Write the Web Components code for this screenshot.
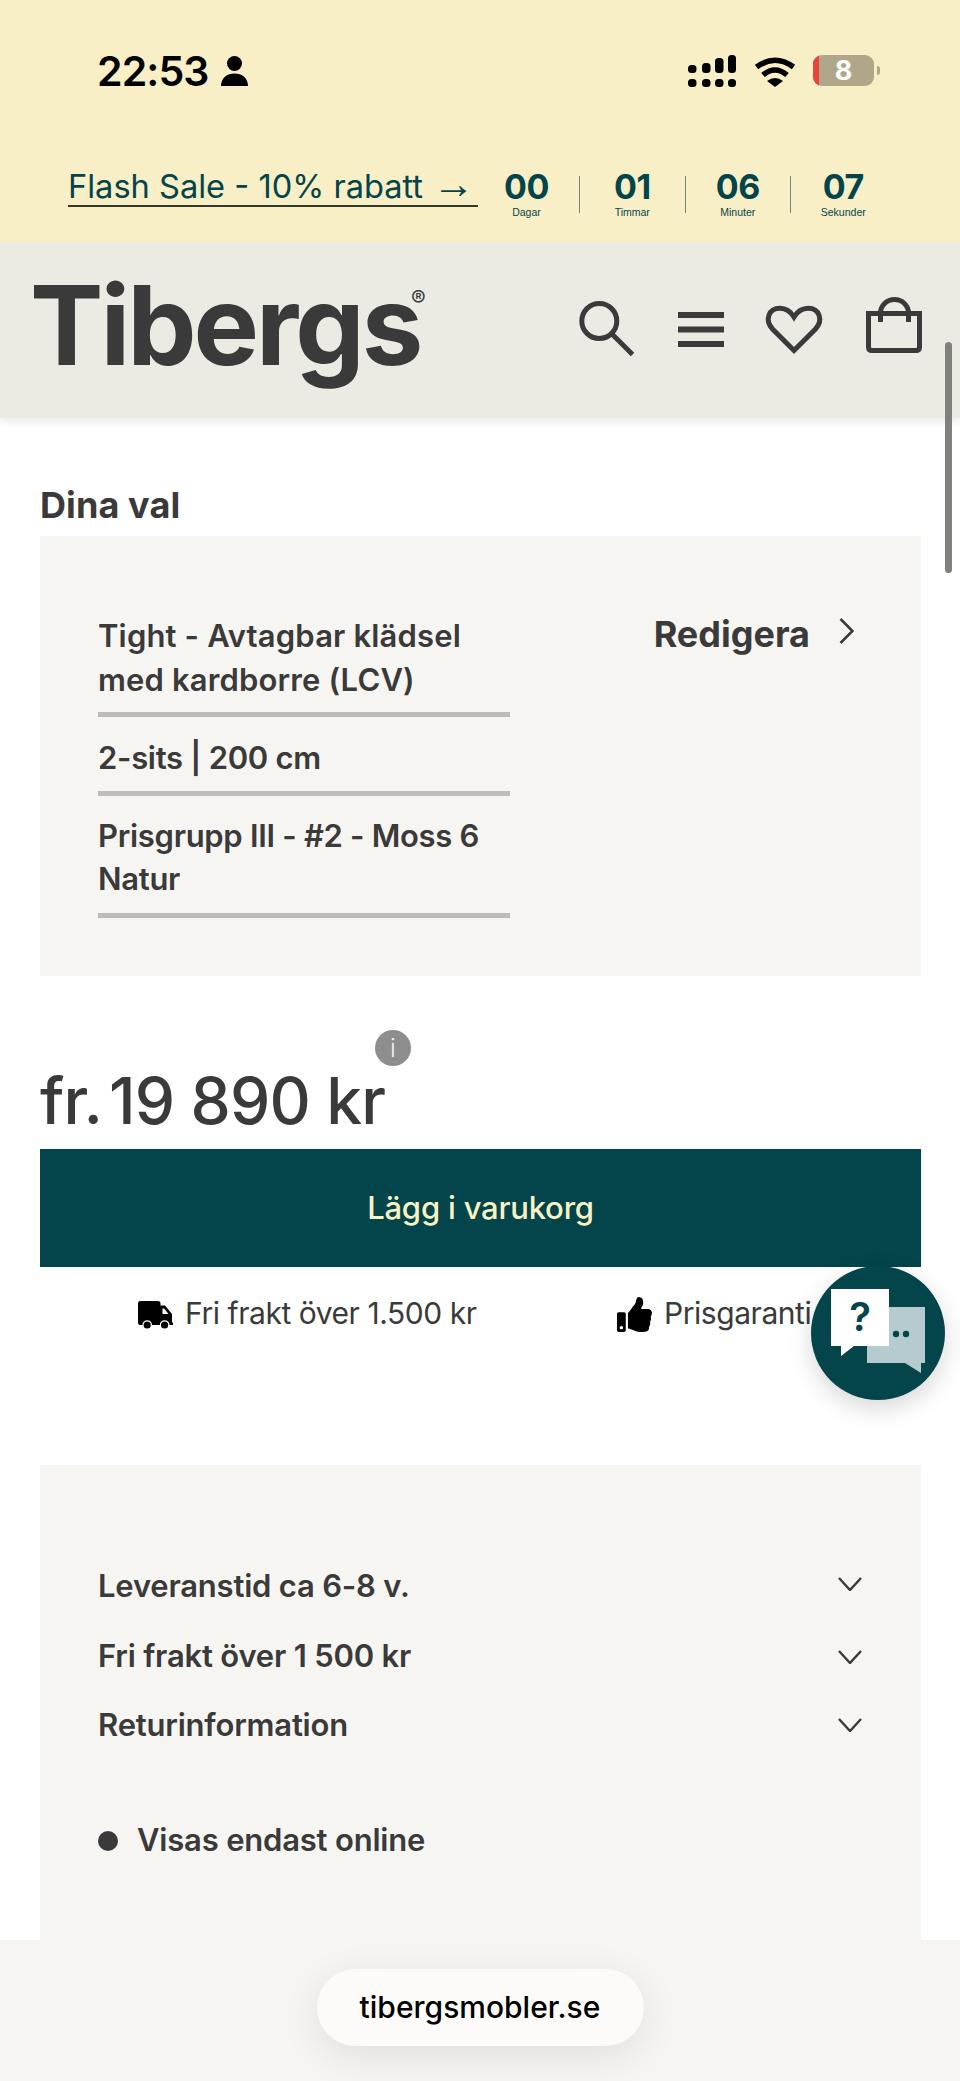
<!DOCTYPE html>
<html lang="sv">
<head>
<meta charset="utf-8">
<title>Tibergs</title>
<style>
  html, body { margin: 0; padding: 0; }
  body {
    position: relative;
    width: 960px;
    height: 2081px;
    overflow: hidden;
    background: #fff;
    color: #3a3a3a;
    font-family: Inter, "Noto Sans", sans-serif;
  }
</style>
</head>
<body>
  <status-bar></status-bar>
  <promo-bar></promo-bar>
  <site-header></site-header>
  <main-column>
    <choice-card>
      <span slot="one">Tight - Avtagbar klädsel med kardborre (LCV)</span>
      <span slot="two">2-sits | 200 cm</span>
      <span slot="three">Prisgrupp III - #2 - Moss 6 Natur</span>
    </choice-card>
    <price-block></price-block>
    <usp-row></usp-row>
    <info-card>
      <info-row>Leveranstid ca 6-8 v.</info-row>
      <info-row>Fri frakt över 1 500 kr</info-row>
      <info-row>Returinformation</info-row>
    </info-card>
  </main-column>
  <chat-fab></chat-fab>
  <scroll-thumb></scroll-thumb>
  <browser-bar></browser-bar>

<script>
  // Hjälpare: skapar en klass med style + markup i en öppen shadow root
  function define(name, html) {
    const template = document.createElement('template');
    template.innerHTML = html;
    customElements.define(name, class extends HTMLElement {
      connectedCallback() {
        if (this.shadowRoot) return;
        this.attachShadow({ mode: 'open' }).append(template.content.cloneNode(true));
      }
    });
  }

  define('status-bar', `
    <style>
      :host { display: flex; align-items: center; height: 142px; background: #f9efc6; color: #000; padding-left: 97px; box-sizing: border-box; }
      .time { font: 600 41px/44px Inter, sans-serif; letter-spacing: -.9px; }
      .person { margin-left: 12px; }
      .right { display: flex; align-items: flex-start; margin-left: auto; margin-right: 80px; height: 32px; }
      .wifi { margin-left: 18px; margin-top: 2px; }
      .battery { position: relative; overflow: hidden; width: 61px; height: 31px; margin-left: 17px; border-radius: 9px; background: #b0a78a; color: #fff; font: 700 27px/31px Inter, sans-serif; text-align: center; }
      .battery::before { content: ''; position: absolute; left: 0; top: 0; bottom: 0; width: 6px; background: #e5443f; }
      .nub { width: 3px; height: 9px; margin: 11px 0 0 3px; border-radius: 0 3px 3px 0; background: #b0a78a; }
    </style>
    <span class="time">22:53</span>
    <svg class="person" width="27" height="30" viewBox="0 0 27 30"><circle cx="13.5" cy="7.5" r="7.5"/><path d="M0 30 C0 22 6 17.5 13.5 17.5 S27 22 27 30 Z"/></svg>
    <div class="right">
      <svg width="48" height="32" viewBox="0 0 48 32">
        <rect x="0" y="10" width="8.5" height="8" rx="3.5"/><rect x="14" y="8" width="8.5" height="10" rx="3.5"/><rect x="27" y="3" width="8.5" height="15" rx="3.5"/><rect x="40" y="0" width="8" height="18" rx="3.5"/>
        <rect x="0" y="24" width="8.5" height="8" rx="3.5"/><rect x="14" y="24" width="8.5" height="8" rx="3.5"/><rect x="27" y="24" width="8.5" height="8" rx="3.5"/><rect x="40" y="24" width="8" height="8" rx="3.5"/>
      </svg>
      <svg class="wifi" width="42" height="30" viewBox="0 0 42 30"><path d="M2.5 10 Q21 -3.5 39.5 10 M9 18 Q21 8 33 18" fill="none" stroke="#000" stroke-width="5.5"/><path d="M13 24 Q21 18 29 24 L21 30 Z"/></svg>
      <div class="battery">8</div>
      <div class="nub"></div>
    </div>`);

  define('promo-bar', `
    <style>
      :host { display: flex; height: 100px; background: #f9efc6; color: #04444b; padding-left: 68px; box-sizing: border-box; }
      a { flex: none; display: block; width: 410px; height: 65px; line-height: 37px; padding-top: 26px; box-sizing: border-box; color: inherit; font-size: 32.6px; letter-spacing: 0; white-space: nowrap; text-decoration: none; border-bottom: 2px solid #2f3a2c; }
      .arrow { font-family: "Liberation Sans", sans-serif; font-size: 42px; line-height: 0; }
      .clock { display: flex; }
      time-cell { width: 104.5px; }
      time-cell:first-child { width: 102px; padding-right: 4px; box-sizing: border-box; }
      time-cell:last-child { --divider: transparent; }
    </style>
    <a href="#">Flash Sale - 10% rabatt <span class="arrow">→</span></a>
    <div class="clock">
      <time-cell value="00" unit="Dagar"></time-cell>
      <time-cell value="01" unit="Timmar"></time-cell>
      <time-cell value="06" unit="Minuter"></time-cell>
      <time-cell value="07" unit="Sekunder"></time-cell>
    </div>`);

  customElements.define('time-cell', class extends HTMLElement {
    connectedCallback() {
      this.attachShadow({ mode: 'open' }).innerHTML = `
        <style>
          :host { display: block; height: 37px; margin-top: 34px; border-right: 1px solid var(--divider, #6f8b80); text-align: center; }
          b { display: block; margin-top: -7px; font: 700 34px/36px Inter, sans-serif; letter-spacing: -.5px; }
          span { display: block; margin-top: 1px; font: 400 10.5px/13px "Liberation Sans", sans-serif; }
        </style>
        <b>${this.getAttribute('value')}</b><span>${this.getAttribute('unit')}</span>`;
    }
  });

  define('site-header', `
    <style>
      :host { position: relative; display: flex; align-items: center; height: 176px; background: #ebebe3; box-shadow: 0 4px 8px rgba(0,0,0,.08); color: #3a3a3a; }
      .logo { position: absolute; left: 30px; top: 28px; font: 700 110px/110px Inter, sans-serif; letter-spacing: -3px; }
      .logo small { position: absolute; left: 381px; top: 17px; font: 400 22px/22px Inter, sans-serif; letter-spacing: 0; }
      .icons { display: flex; margin-left: 579px; }
      svg { display: block; overflow: visible; fill: none; stroke: #3a3a3a; stroke-width: 5; }
      .ham { margin-left: 43px; } .heart { margin-left: 42px; } .bag { margin-left: 44px; }
    </style>
    <div class="logo">Tibergs<small>®</small></div>
    <div class="icons">
      <svg width="56" height="60" viewBox="0 0 56 60"><circle cx="20.3" cy="21" r="17.5"/><path d="M33 34 L53.5 54.5"/></svg>
      <svg class="ham" width="46" height="60" viewBox="0 0 46 60"><path d="M0 15 H46 M0 29.5 H46 M0 44 H46" stroke-width="6"/></svg>
      <svg class="heart" width="56" height="60" viewBox="0 0 56 60"><path d="M28 50.5 L6.5 29 C-1.5 20 2.5 8.2 14 8.2 C20 8.2 25 12 28 17 C31 12 36 8.2 42 8.2 C53.5 8.2 57.5 20 49.5 29 Z"/></svg>
      <svg class="bag" width="56" height="60" viewBox="0 0 56 60"><path d="M2.5 13.5 H53.5 V47 Q53.5 50.5 50 50.5 H6 Q2.5 50.5 2.5 47 Z M14.5 22 V13 A14 13.5 0 0 1 42.5 13 V22"/></svg>
    </div>`);

  define('main-column', `
    <style>
      :host { display: block; padding: 65px 39px 0 40px; }
      h2 { margin: 0 0 9px; font: 700 36px/44px Inter, sans-serif; letter-spacing: .1px; color: #3a3a3a; }
    </style>
    <h2>Dina val</h2>
    <slot></slot>`);

  define('choice-card', `
    <style>
      :host { display: flex; justify-content: space-between; padding: 78px 67px 58px 58px; background: #f7f5f2; font: 600 31px/43.5px Inter, sans-serif; letter-spacing: .15px; color: #3a3a3a; }
      ul { width: 412px; margin: 0; padding: 0; list-style: none; }
      li { padding: 18px 0 12px; border-bottom: 5px solid #bcbcba; letter-spacing: -.3px; }
      li:first-child { padding-top: 0; padding-bottom: 11px; letter-spacing: .15px; }
      li:nth-child(2) { padding: 19px 0 11px; }
      .edit { display: flex; align-items: flex-start; margin-top: -2px; font: 700 36px/44px Inter, sans-serif; letter-spacing: 0; }
      svg { margin: 6px 0 0 29px; fill: none; stroke: #3a3a3a; stroke-width: 2.6; }
    </style>
    <ul>
      <li><slot name="one"></slot></li>
      <li><slot name="two"></slot></li>
      <li><slot name="three"></slot></li>
    </ul>
    <div class="edit">Redigera
      <svg width="15" height="26" viewBox="0 0 15 26"><path d="M1.5 1 L13.5 13 L1.5 25"/></svg>
    </div>`);

  define('price-block', `
    <style>
      :host { position: relative; display: block; padding-top: 85px; }
      .price { font: 500 64px/80px Inter, sans-serif; letter-spacing: -.8px; color: #3a3a3a; }
      .fr { margin-right: 7px; }
      .info { position: absolute; left: 335px; top: 54px; width: 36px; height: 36px; border-radius: 50%; background: #8e8e8e; color: #f2f2f2; font: 300 25px/36px Inter, sans-serif; text-align: center; }
      button { display: block; width: 100%; height: 118px; margin-top: 8px; padding: 0; border: 0; background: #04444b; color: #f9f3c4; font: 500 31px/40px Inter, sans-serif; letter-spacing: -.2px; }
    </style>
    <div class="price"><span class="fr">fr.</span>19 890 kr</div>
    <div class="info">i</div>
    <button>Lägg i varukorg</button>`);

  define('usp-row', `
    <style>
      :host { display: flex; height: 198px; padding: 26px 0 0 98px; box-sizing: border-box; font: 400 30px/40px Inter, sans-serif; letter-spacing: -.45px; color: #3a3a3a; }
      .usp { display: flex; align-items: flex-start; }
      .usp + .usp { margin-left: auto; width: 304px; }
      svg { flex: none; margin-right: 12px; }
    </style>
    <div class="usp">
      <svg width="35" height="28" viewBox="0 0 35 28" style="margin-top:8px"><path d="M2.5 0 H20 Q22.5 0 22.5 2.5 V4.5 H27 L34 13 V21.5 H35 V24 H31.5 A4.8 4.8 0 0 0 21.8 24 H14 A4.8 4.8 0 0 0 4.4 24 H2.5 Q0 24 0 21.5 V2.5 Q0 0 2.5 0 Z M24.5 7.5 V13 H30.5 L26 7.5 Z" fill-rule="evenodd"/><circle cx="9.2" cy="24" r="3.6"/><circle cx="26.6" cy="24" r="3.6"/></svg>
      <span>Fri frakt över 1.500 kr</span>
    </div>
    <div class="usp">
      <svg width="35" height="35" viewBox="0 0 512 512" style="margin-top:4px"><path d="M104 224H24c-13.255 0-24 10.745-24 24v240c0 13.255 10.745 24 24 24h80c13.255 0 24-10.745 24-24V248c0-13.255-10.745-24-24-24zM64 472c-13.255 0-24-10.745-24-24s10.745-24 24-24 24 10.745 24 24-10.745 24-24 24zM384 81.452c0 42.416-25.97 66.208-33.277 94.548h101.723c33.397 0 59.397 27.746 59.553 58.098.084 17.938-7.546 37.249-19.439 49.197l-.11.11c9.836 23.337 8.237 56.037-9.308 79.469 8.681 25.895-.069 57.704-16.382 74.757 4.298 17.598 2.244 32.575-6.148 44.632C440.202 511.587 389.616 512 346.839 512l-2.845-.001c-48.287-.017-87.806-17.598-119.56-31.725-15.957-7.099-36.821-15.887-52.651-16.178-6.54-.12-11.783-5.457-11.783-11.998v-213.77c0-3.2 1.282-6.271 3.558-8.521 39.614-39.144 56.648-80.587 89.117-113.111 14.804-14.832 20.188-37.236 25.393-58.902C282.515 39.293 291.817 0 312 0c24 0 72 8 72 81.452z"/></svg>
      <span>Prisgaranti</span>
    </div>`);

  define('info-card', `
    <style>
      :host { display: block; padding: 99px 59px 130px 58px; background: #f7f5f2; color: #3a3a3a; font: 600 31px/44px Inter, sans-serif; letter-spacing: -.2px; }
      .rows { display: flex; flex-direction: column; gap: 25.5px; }
      .online { display: flex; align-items: center; gap: 19px; margin-top: 71px; }
      .online i { flex: none; width: 20px; height: 20px; margin-top: 3px; border-radius: 50%; background: #3a3a3a; }
    </style>
    <div class="rows"><slot></slot></div>
    <div class="online"><i></i><span>Visas endast online</span></div>`);

  define('info-row', `
    <style>
      :host { display: flex; align-items: center; justify-content: space-between; }
      :host(:nth-child(2)) { position: relative; top: 1px; }
      svg { margin-top: 1px; fill: none; stroke: #3a3a3a; stroke-width: 2.4; }
      :host(:first-child) svg { margin-top: -4px; }
    </style>
    <span><slot></slot></span>
    <svg width="24" height="14" viewBox="0 0 24 14"><path d="M1 1 L12 13 L23 1"/></svg>`);

  define('chat-fab', `
    <style>
      :host { position: absolute; left: 811px; top: 1266px; width: 134px; height: 134px; border-radius: 50%; background: #04444b; box-shadow: 0 8px 24px rgba(0,0,0,.16); }
      svg { display: block; }
      text { font: 600 40px Inter, sans-serif; fill: #04444b; }
    </style>
    <svg width="134" height="134" viewBox="0 0 134 134">
      <path d="M56 41 H114 V97 H110 V107 L94 97 H56 Z" fill="#b5cbce"/>
      <circle cx="85" cy="68" r="3.2" fill="#04444b"/><circle cx="95" cy="68" r="3.2" fill="#04444b"/>
      <path d="M20 23 H78 V80 H43 L30 90 V80 H20 Z" fill="#fff"/>
      <text x="49" y="65" text-anchor="middle">?</text>
    </svg>`);

  define('scroll-thumb', `
    <style>
      :host { position: absolute; left: 945px; top: 342px; width: 7px; height: 231px; border-radius: 4px; background: #80807c; }
    </style>`);

  define('browser-bar', `
    <style>
      :host { position: absolute; left: 0; right: 0; bottom: 0; display: flex; justify-content: center; height: 141px; padding-top: 29px; box-sizing: border-box; background: #f6f5f3; }
      div { width: 327px; height: 77px; border-radius: 39px; background: #fcfbf9; box-shadow: 0 10px 40px rgba(0,0,0,.09); color: #000; font: 500 30px/77px Inter, sans-serif; text-align: center; }
    </style>
    <div>tibergsmobler.se</div>`);
</script>
</body>
</html>
